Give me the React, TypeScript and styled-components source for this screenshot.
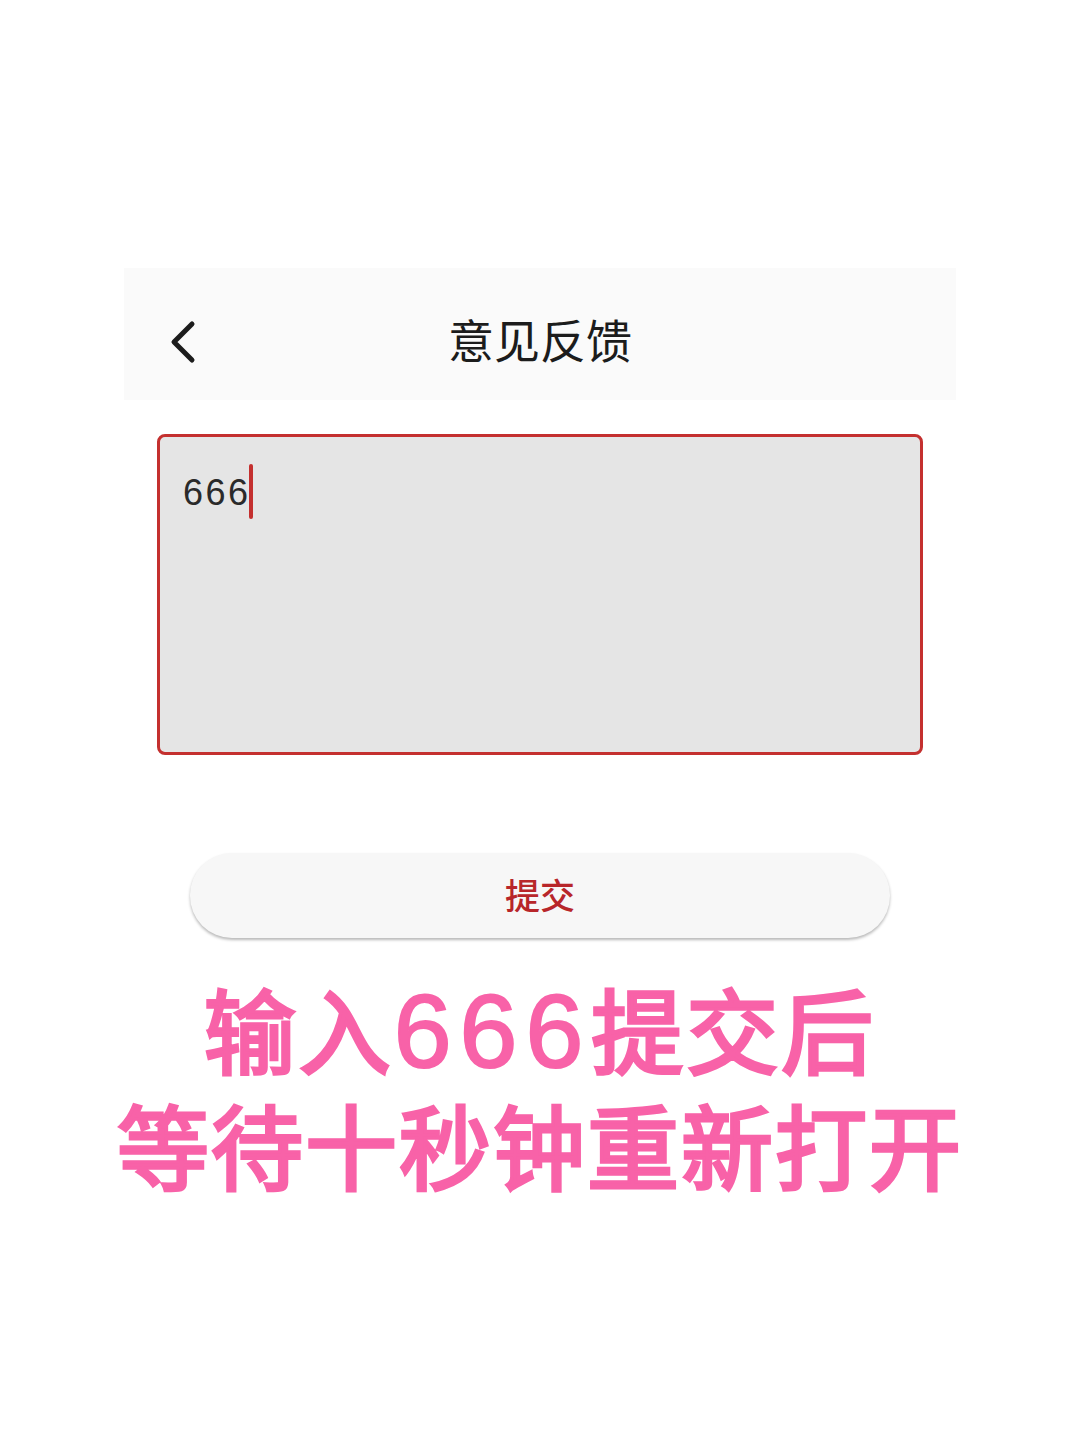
import React from 'react';
import styled, { createGlobalStyle } from 'styled-components';

const GlobalStyle = createGlobalStyle`
  html, body {
    margin: 0;
    padding: 0;
    background: #fff;
  }
`;

const Page = styled.div`
  width: 1080px;
  height: 1440px;
  padding-top: 268px;
  box-sizing: border-box;
  display: flex;
  flex-direction: column;
  align-items: center;
  background: #fff;
  overflow: hidden;
  font-family: "Noto Sans CJK SC", "Liberation Sans", sans-serif;
`;

const Header = styled.div`
  width: 832px;
  height: 132px;
  flex: none;
  box-sizing: border-box;
  padding: 0 46px;
  display: grid;
  grid-template-columns: 40px 1fr 40px;
  align-items: center;
  background: #fafafa;
`;

const BackIcon = styled.svg`
  width: 30px;
  height: 46px;
  display: block;
  margin-top: 15px;
`;

const Title = styled.div`
  text-align: center;
  font-size: 46px;
  font-weight: 400;
  line-height: 46px;
  color: #1c1c1c;
  padding-top: 8px;
`;

const InputBox = styled.div`
  width: 766px;
  height: 321px;
  flex: none;
  margin-top: 34px;
  box-sizing: border-box;
  border: 3.5px solid #c4302f;
  border-radius: 8px;
  background: #e5e5e5;
  padding: 27px 0 0 23px;
  display: flex;
  align-items: flex-start;
`;

const InputText = styled.span`
  font-family: "Liberation Sans", sans-serif;
  font-size: 36px;
  line-height: 58px;
  letter-spacing: 2.5px;
  color: #2a2a2a;
`;

const Caret = styled.span`
  width: 4px;
  height: 55px;
  flex: none;
  margin-left: -2px;
  border-radius: 2px;
  background: #c4302f;
`;

const SubmitButton = styled.button`
  width: 700px;
  height: 85px;
  flex: none;
  margin-top: 98px;
  border: none;
  border-radius: 42px;
  background: #f7f7f7;
  box-shadow: 0 2px 3px rgba(0, 0, 0, 0.28);
  font-family: inherit;
  font-size: 35px;
  font-weight: 500;
  color: #b8262a;
  padding: 0 0 4px;
`;

const Caption = styled.div`
  margin-top: 33px;
  width: 1080px;
  text-align: center;
  font-size: 92px;
  font-weight: 400;
  line-height: 111px;
  color: #f862a8;
  white-space: nowrap;
  -webkit-text-stroke: 3.5px #f862a8;
`;

const FirstLine = styled.div`
  letter-spacing: 3px;
`;

const SecondLine = styled.div`
  letter-spacing: 2px;
`;

const Digits = styled.span`
  font-family: "Liberation Sans", sans-serif;
  font-size: 104px;
  letter-spacing: 8px;
  -webkit-text-stroke: 2px #f862a8;
`;

export default function App() {
  return (
    <Page>
      <GlobalStyle />
      <Header>
        <BackIcon viewBox="0 0 30 46">
          <path d="M22 5 L4 23 L22 41" fill="none" stroke="#1c1c1c" strokeWidth="5" strokeLinecap="round" strokeLinejoin="round" />
        </BackIcon>
        <Title>意见反馈</Title>
        <span />
      </Header>
      <InputBox>
        <InputText>666</InputText>
        <Caret />
      </InputBox>
      <SubmitButton>提交</SubmitButton>
      <Caption>
        <FirstLine>输入<Digits>666</Digits>提交后</FirstLine>
        <SecondLine>等待十秒钟重新打开</SecondLine>
      </Caption>
    </Page>
  );
}
